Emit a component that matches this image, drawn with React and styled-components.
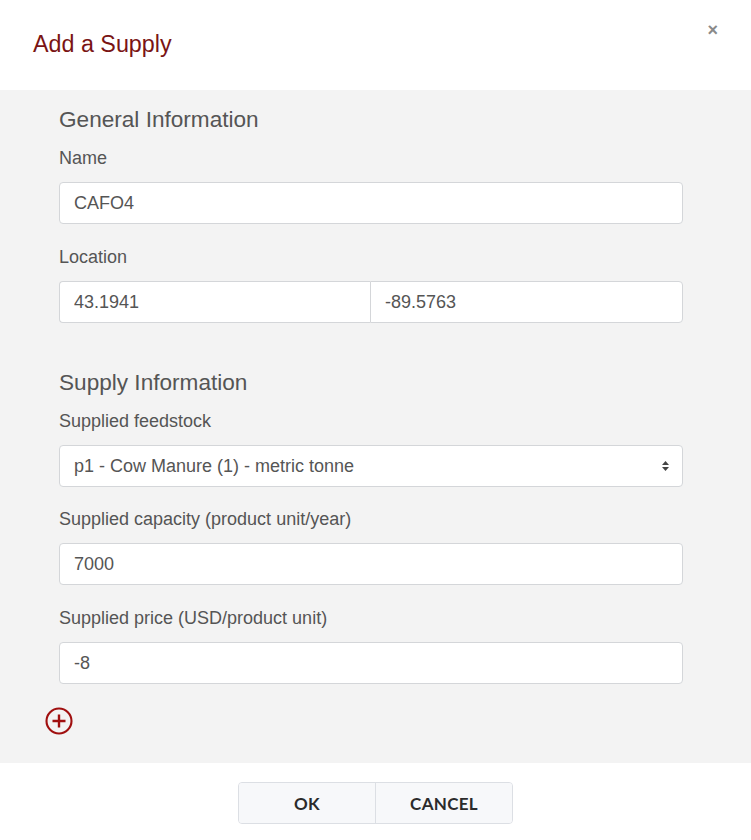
import React from "react";
import styled, { createGlobalStyle } from "styled-components";

const Global = createGlobalStyle`
  html, body { margin: 0; padding: 0; background: #fff; }
  body { font-family: "Liberation Sans", Arial, sans-serif; }
  * { box-sizing: border-box; }
`;

const Modal = styled.div`
  width: 751px;
  height: 840px;
  display: flex;
  flex-direction: column;
  background: #fff;
`;

const Header = styled.div`
  position: relative;
  height: 90px;
  display: flex;
  align-items: center;
  padding-left: 33px;
  padding-bottom: 2px;
`;

const Title = styled.h4`
  margin: 0;
  font-size: 23.3px;
  font-weight: 400;
  color: #7a1414;
`;

const Close = styled.button`
  position: absolute;
  top: 20px;
  right: 33px;
  border: 0;
  background: none;
  padding: 0;
  font-family: "Liberation Sans", Arial, sans-serif;
  font-size: 18px;
  font-weight: 700;
  color: #8a8a8a;
  line-height: 20px;
`;

const Body = styled.div`
  background: #f3f3f3;
  height: 673px;
  padding: 17px 68px 0 59px;
  display: flex;
  flex-direction: column;
`;

const SectionTitle = styled.h5`
  margin: 0 0 13px;
  font-size: 22.6px;
  line-height: 26px;
  font-weight: 400;
  color: #555;
  margin-top: ${(p) => (p.$first ? "0" : "47px")};
`;

const Field = styled.div`
  display: flex;
  flex-direction: column;
  gap: 12px;
  margin-bottom: ${(p) => p.$mb || "21px"};
`;

const Label = styled.label`
  font-size: 18px;
  line-height: 24px;
  color: #555;
`;

const Input = styled.input`
  height: 42px;
  width: 100%;
  border: 1px solid #d4d6d9;
  border-radius: 4px;
  background: #fff;
  padding: 0 14px;
  font-family: "Liberation Sans", Arial, sans-serif;
  font-size: 18px;
  color: #555;
  outline: none;
`;

const Group = styled.div`
  display: flex;
  ${Input} {
    flex: 1;
  }
  ${Input}:first-child {
    border-radius: 4px 0 0 4px;
    flex: 0 0 311px;
    border-right: 0;
  }
  ${Input}:last-child {
    border-radius: 0 4px 4px 0;
  }
`;

const SelectBox = styled.div`
  height: 42px;
  border: 1px solid #d4d6d9;
  border-radius: 4px;
  background: #fff;
  padding: 0 12px 0 14px;
  display: flex;
  align-items: center;
  justify-content: space-between;
  font-size: 18px;
  color: #555;
`;

const AddButton = styled.button`
  margin: 22px 0 0 -15px;
  width: 30px;
  height: 30px;
  padding: 0;
  border: 0;
  background: none;
  display: flex;
`;

const Footer = styled.div`
  flex: 1;
  display: flex;
  justify-content: center;
  padding-top: 19px;
`;

const BtnGroup = styled.div`
  display: flex;
  height: 42px;
  border: 1px solid #dcdfe4;
  border-radius: 4px;
  overflow: hidden;
  background: #f7f8fa;
`;

const Btn = styled.button`
  width: ${(p) => p.$w}px;
  border: 0;
  border-left: ${(p) => (p.$divider ? "1px solid #dcdfe4" : "0")};
  background: #f7f8fa;
  font-family: Lato, "Noto Sans", sans-serif;
  font-weight: 700;
  font-size: 17px;
  letter-spacing: 0.3px;
  color: #2b2b2b;
`;

const Arrows = () => (
  <svg width="9" height="12" viewBox="0 0 9 12">
    <path d="M4.5 1 L8 5 H1 Z" fill="#444" />
    <path d="M4.5 11 L8 7 H1 Z" fill="#444" />
  </svg>
);

const PlusCircle = () => (
  <svg width="30" height="30" viewBox="0 0 30 30">
    <circle cx="15" cy="15" r="12.5" fill="none" stroke="#a00f0f" strokeWidth="2.1" />
    <path d="M15 8.5 V21.5 M8.5 15 H21.5" stroke="#a00f0f" strokeWidth="2.4" />
  </svg>
);

export default function App() {
  return (
    <>
      <Global />
      <Modal>
        <Header>
          <Title>Add a Supply</Title>
          <Close aria-label="Close">×</Close>
        </Header>
        <Body>
          <SectionTitle $first>General Information</SectionTitle>
          <Field>
            <Label>Name</Label>
            <Input defaultValue="CAFO4" />
          </Field>
          <Field $mb="0">
            <Label>Location</Label>
            <Group>
              <Input defaultValue="43.1941" />
              <Input defaultValue="-89.5763" />
            </Group>
          </Field>
          <SectionTitle>Supply Information</SectionTitle>
          <Field $mb="20px">
            <Label>Supplied feedstock</Label>
            <SelectBox>
              <span>p1 - Cow Manure (1) - metric tonne</span>
              <Arrows />
            </SelectBox>
          </Field>
          <Field>
            <Label>Supplied capacity (product unit/year)</Label>
            <Input defaultValue="7000" />
          </Field>
          <Field $mb="0">
            <Label>Supplied price (USD/product unit)</Label>
            <Input defaultValue="-8" />
          </Field>
          <AddButton aria-label="Add">
            <PlusCircle />
          </AddButton>
        </Body>
        <Footer>
          <BtnGroup>
            <Btn $w={136}>OK</Btn>
            <Btn $w={137} $divider>CANCEL</Btn>
          </BtnGroup>
        </Footer>
      </Modal>
    </>
  );
}
